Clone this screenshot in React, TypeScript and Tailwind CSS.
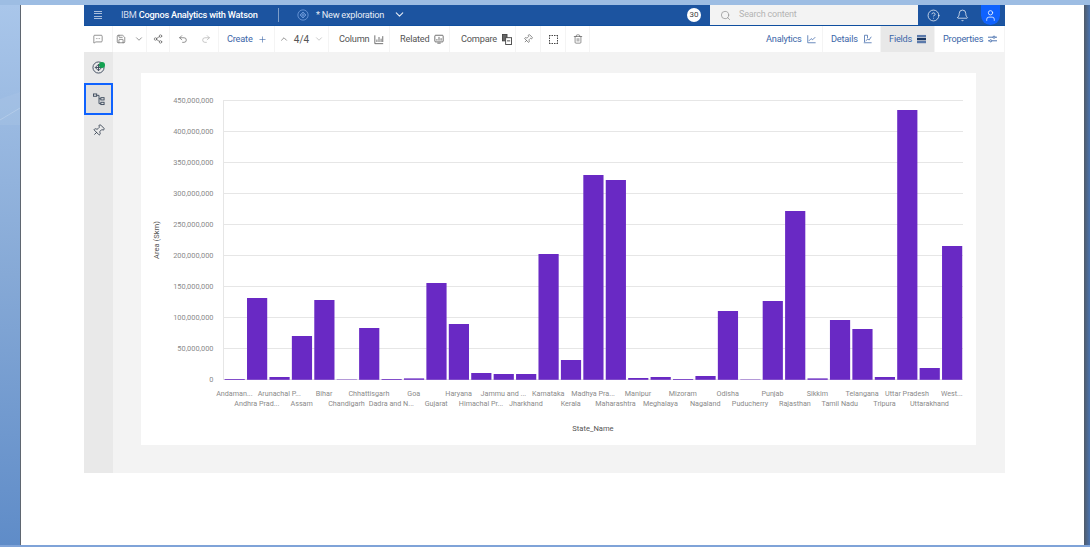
import {
  Bell,
  ChevronDown,
  ChevronUp,
  CircleHelp,
  MessageSquareMore,
  Pin,
  Plus,
  Redo2,
  Save,
  Search,
  Share2,
  Trash2,
  Undo2,
  User,
} from 'lucide-react'
import type { ReactNode } from 'react'

const font = 'font-["Roboto",sans-serif]'

// [label, top of bar in chart px]
const states: [string, number][] = [
  ['Andaman...', 379],
  ['Andhra Prad...', 298],
  ['Arunachal P...', 377],
  ['Assam', 336],
  ['Bihar', 300],
  ['Chandigarh', 379.4],
  ['Chhattisgarh', 328],
  ['Dadra and N...', 379],
  ['Goa', 378.4],
  ['Gujarat', 283],
  ['Haryana', 324],
  ['Himachal Pr...', 373],
  ['Jammu and ...', 374],
  ['Jharkhand', 374],
  ['Karnataka', 254],
  ['Kerala', 360],
  ['Madhya Pra...', 175],
  ['Maharashtra', 180],
  ['Manipur', 378],
  ['Meghalaya', 377],
  ['Mizoram', 379],
  ['Nagaland', 376],
  ['Odisha', 311],
  ['Puducherry', 379.4],
  ['Punjab', 301],
  ['Rajasthan', 211],
  ['Sikkim', 378.4],
  ['Tamil Nadu', 320],
  ['Telangana', 329],
  ['Tripura', 377],
  ['Uttar Pradesh', 110],
  ['Uttarakhand', 368],
  ['West...', 246],
]

const ticks = ['450,000,000', '400,000,000', '350,000,000', '300,000,000', '250,000,000', '200,000,000', '150,000,000', '100,000,000', '50,000,000', '0']

function Chart() {
  return (
    <svg width="835" height="372" viewBox="141 73 835 372" className={`block ${font}`}>
      {ticks.map((t, i) => {
        const y = 100 + i * 31
        return (
          <g key={t}>
            <line x1={223} x2={963} y1={y + 0.5} y2={y + 0.5} stroke="#e6e6e6" />
            <text x={213.5} y={y + 3} fontSize="7.4" textAnchor="end" fill="#8a8a8a">{t}</text>
          </g>
        )
      })}
      <line x1={223.5} x2={223.5} y1={100} y2={380} stroke="#e6e6e6" />
      {states.map(([name, top], i) => {
        const x = 224.6 + i * 22.42
        return (
          <g key={name}>
            <rect x={x} y={top} width={20.2} height={379.8 - top} fill="#6929c4" />
            <text x={x + 9.8} y={i % 2 === 0 ? 395.5 : 405.5} fontSize="7.2" textAnchor="middle" fill="#8a8a8a">{name}</text>
          </g>
        )
      })}
      <text x={593} y={431} fontSize="7.6" textAnchor="middle" fill="#555">State_Name</text>
      <text x={159} y={240} fontSize="7.6" textAnchor="middle" fill="#555" transform="rotate(-90 159 240)">Area (Skm)</text>
    </svg>
  )
}

function ColumnIcon() {
  return (
    <svg width="10" height="11" viewBox="0 0 12 12" fill="none" stroke="#555" strokeWidth="1">
      <path d="M1 1v10h10M3.5 9V6M6 9V3M8.5 9V5M10.5 9V2" />
    </svg>
  )
}

function RelatedIcon() {
  return (
    <svg width="10" height="10" viewBox="0 0 12 12" fill="none" stroke="#555" strokeWidth="1">
      <rect x="1" y="1.5" width="10" height="8" rx="1" />
      <path d="M3.5 8V6M6 8V3.5M8.5 8V5M4 11h4" />
    </svg>
  )
}

function CompareIcon() {
  return (
    <svg width="10" height="11" viewBox="0 0 11 12" fill="none" stroke="#444" strokeWidth="1">
      <rect x="0.5" y="0.5" width="5" height="7" fill="#666" />
      <rect x="4" y="4" width="6.5" height="7.5" fill="#fff" />
      <path d="M5.5 7.5h3.5" />
    </svg>
  )
}

function MarqueeIcon() {
  return (
    <svg width="9" height="9" viewBox="0 0 9 9" fill="none" stroke="#444" strokeWidth="1">
      <path d="M0.5 2.5v4M8.5 2.5v4M2.5 0.5h4M2.5 8.5h4" strokeDasharray="1.5 1" />
      <path d="M0 0.5h1.5M0.5 0v1.5M7.5 0.5H9M8.5 0v1.5M0 8.5h1.5M0.5 7.5V9M7.5 8.5H9M8.5 7.5V9" />
    </svg>
  )
}

function AnalyticsIcon() {
  return (
    <svg width="9" height="10" viewBox="0 0 12 12" fill="none" stroke="#3c66a8" strokeWidth="1">
      <path d="M1 1v10h10.5M2.5 8.5l3-3 2 1.5 3.5-3.5" />
    </svg>
  )
}

function DetailsIcon() {
  return (
    <svg width="9" height="10" viewBox="0 0 12 12" fill="none" stroke="#3c66a8" strokeWidth="1">
      <path d="M1 11h10.5M2 10V1h4v4M3.5 8.5l3-2.5 1.5 1.5L11 3" />
    </svg>
  )
}

function FieldsIcon() {
  return (
    <svg width="9" height="10" viewBox="0 0 10 10">
      <rect x="0" y="0.5" width="10" height="2.6" fill="#5b7aab" />
      <rect x="0" y="3.8" width="10" height="2.6" fill="#16345f" />
      <rect x="0" y="7.1" width="10" height="2.6" fill="#5b7aab" />
    </svg>
  )
}

function PropertiesIcon() {
  return (
    <svg width="9" height="8" viewBox="0 0 10 8" fill="none" stroke="#3c66a8" strokeWidth="1">
      <path d="M0 2h5.5M8 2h2M0 6h1.5M4.5 6H10" />
      <circle cx="6.7" cy="2" r="1.2" />
      <circle cx="3" cy="6" r="1.2" />
    </svg>
  )
}

function WatsonMark({ color, size }: { color: string; size: number }) {
  return (
    <svg width={size} height={size} viewBox="0 0 14 14" fill="none" stroke={color} strokeWidth="1">
      <circle cx="7" cy="7" r="6" />
      <path d="M7 3.5L10.5 7 7 10.5 3.5 7zM3.5 7h7M7 3.5v7" />
    </svg>
  )
}

function TreeIcon() {
  return (
    <svg width="12" height="13" viewBox="0 0 13 13" fill="none" stroke="#3c4a5c" strokeWidth="1">
      <rect x="0.5" y="0.5" width="3.5" height="2.5" />
      <rect x="8.5" y="4.5" width="3.5" height="2.5" />
      <rect x="8.5" y="9.5" width="3.5" height="2.5" />
      <path d="M4 2h2.5v9h2M6.5 5.7h2" />
    </svg>
  )
}

function Cell({ w, children }: { w: string; children: ReactNode }) {
  return (
    <div className={`${w} flex h-full shrink-0 items-center justify-center gap-[8px] border-r border-[#f4f4f4]`}>
      {children}
    </div>
  )
}

function LabelCell({ w, children, active }: { w: string; children: ReactNode; active?: boolean }) {
  return (
    <div className={`${w} flex h-full shrink-0 items-center gap-[5px] border-r border-[#f4f4f4] tracking-[-0.2px] ${active ? 'bg-[#e8e8e8]' : ''}`}>
      {children}
    </div>
  )
}

function TopBar() {
  return (
    <div className="flex h-[21px] shrink-0 items-stretch border-b border-[#0f4f9f] bg-[#1c54a0] text-white">
      <div className="flex w-[602px] shrink-0 items-center">
        <div className="flex w-[27px] shrink-0 flex-col items-center gap-[1.5px]">
          <span className="h-px w-[8px] bg-[#a9bedc]" />
          <span className="h-px w-[8px] bg-[#a9bedc]" />
          <span className="h-px w-[8px] bg-[#a9bedc]" />
          <span className="h-px w-[8px] bg-[#a9bedc]" />
        </div>
        <div className="ml-[10px] w-[157px] shrink-0 whitespace-nowrap text-[9.2px] tracking-[-0.2px]">
          <span className="text-[#d5dfee]">IBM </span>
          <span className="font-medium">Cognos Analytics with Watson</span>
        </div>
        <span className="h-[14px] w-px bg-[#7e9ec9]" />
        <div className="ml-[18px] flex items-center">
          <WatsonMark color="#6f9adb" size={12} />
          <span className="ml-[7px] whitespace-nowrap text-[9.2px] tracking-[-0.25px] text-[#e6ecf5]">* New exploration</span>
          <ChevronDown size={13} strokeWidth={2} className="ml-[9px] text-[#e6ecf5]" />
        </div>
      </div>
      <div className="flex w-[24px] shrink-0 items-center justify-end pr-[9px]">
        <span className="flex h-[14px] w-[14px] shrink-0 items-center justify-center rounded-full bg-white text-[8px] text-[#444]">30</span>
      </div>
      <div className="flex w-[208px] shrink-0 items-center bg-[#f3f3f3] pl-[10px] text-[#8c8c8c]">
        <Search size={11} strokeWidth={1.5} />
        <span className="ml-[8px] text-[9px] tracking-[-0.2px] text-[#b4b4b4]">Search content</span>
      </div>
      <div className="flex w-[87px] shrink-0 items-center">
        <CircleHelp size={13} strokeWidth={1.3} className="ml-[9px]" />
        <Bell size={13} strokeWidth={1.3} className="ml-[16px]" />
        <span className="ml-[12px] flex h-full w-[19px] items-center justify-center rounded-b-full bg-[#0f62fe]">
          <User size={13} strokeWidth={1.4} />
        </span>
      </div>
    </div>
  )
}

function Toolbar() {
  const label = 'text-[9.2px] text-[#555] whitespace-nowrap'
  const blue = 'text-[9.2px] text-[#3c66a8] whitespace-nowrap'
  return (
    <div className="flex h-[26px] shrink-0 items-center bg-white text-[#555]">
      <Cell w="w-[29px]"><MessageSquareMore size={10} strokeWidth={1.5} /></Cell>
      <Cell w="w-[34px]">
        <Save size={10} strokeWidth={1.5} />
        <ChevronDown size={10} strokeWidth={1.5} />
      </Cell>
      <Cell w="w-[23px]"><Share2 size={10} strokeWidth={1.5} /></Cell>
      <Cell w="w-[49px]">
        <Undo2 size={10} strokeWidth={1.5} className="mr-[5px]" />
        <Redo2 size={10} strokeWidth={1.5} className="text-[#a8a8a8]" />
      </Cell>
      <LabelCell w="w-[56px] pl-[8px]">
        <span className={blue}>Create</span>
        <Plus size={9} strokeWidth={1.6} className="text-[#3c66a8]" />
      </LabelCell>
      <Cell w="w-[54px]">
        <div className="flex items-center gap-[5px]">
          <ChevronUp size={10} strokeWidth={1.5} />
          <span className="text-[10px]">4/4</span>
          <ChevronDown size={10} strokeWidth={1.5} className="text-[#a8a8a8]" />
        </div>
      </Cell>
      <LabelCell w="w-[61px] pl-[10px]"><span className={label}>Column</span><ColumnIcon /></LabelCell>
      <LabelCell w="w-[60px] pl-[10px]"><span className={label}>Related</span><RelatedIcon /></LabelCell>
      <LabelCell w="w-[66px] pl-[11px]"><span className={label}>Compare</span><CompareIcon /></LabelCell>
      <Cell w="w-[25px]"><Pin size={10} strokeWidth={1.5} className="rotate-45" /></Cell>
      <Cell w="w-[25px]"><MarqueeIcon /></Cell>
      <Cell w="w-[24px]"><Trash2 size={10} strokeWidth={1.5} /></Cell>
      <div className="grow" />
      <LabelCell w="w-[65px] pl-[8px]"><span className={blue}>Analytics</span><AnalyticsIcon /></LabelCell>
      <LabelCell w="w-[58px] pl-[8px]"><span className={blue}>Details</span><DetailsIcon /></LabelCell>
      <LabelCell w="w-[54px] pl-[8px]" active><span className={blue}>Fields</span><FieldsIcon /></LabelCell>
      <LabelCell w="w-[70px] pl-[8px]"><span className={blue}>Properties</span><PropertiesIcon /></LabelCell>
    </div>
  )
}

function SideRail() {
  return (
    <div className="flex w-[29px] shrink-0 flex-col bg-[#e9e9e9] text-[#3c4a5c]">
      <div className="relative flex h-[31px] items-center justify-center">
        <WatsonMark color="#3c4a5c" size={13} />
        <span className="absolute left-[15px] top-[10px] h-[6px] w-[6px] rounded-full bg-[#12a150]" />
      </div>
      <div className="flex h-[32px] items-center justify-center border-2 border-[#0f62fe] bg-[#e0e0e0]">
        <TreeIcon />
      </div>
      <div className="flex h-[31px] items-center justify-center">
        <Pin size={13} strokeWidth={1.5} className="rotate-45 text-[#2f3b4c]" />
      </div>
    </div>
  )
}

function DesktopStrip() {
  return (
    <div className="relative w-[20px] shrink-0 bg-gradient-to-b from-[#a9c6ea] via-[#86a9d6] to-[#5f8cc8]">
      <svg width="20" height="40" viewBox="0 0 20 40" className="absolute left-0 top-[80px]">
        <path d="M0 14L20 7V40H0z" fill="#ffffff" fillOpacity="0.06" />
        <path d="M0 35L20 23" stroke="#ffffff" strokeOpacity="0.2" fill="none" />
      </svg>
    </div>
  )
}

export default function App() {
  return (
    <div className={`flex h-[547px] w-[1090px] flex-col overflow-hidden bg-[#7ba0d4] ${font}`}>
      <div className="h-[5px] shrink-0 bg-[#9dbde3]" />
      <div className="flex h-[540px] shrink-0">
        <DesktopStrip />
        <div className="w-px shrink-0 bg-[#5f6670]" />
        <div className="w-[1063px] shrink-0 bg-white pl-[63px]">
          <div className="flex h-[468px] w-[921px] flex-col">
            <TopBar />
            <Toolbar />
            <div className="flex grow">
              <SideRail />
              <div className="grow bg-[#f3f3f3] pl-[28px] pt-[21px]">
                <div className="w-[835px] bg-white">
                  <Chart />
                </div>
              </div>
            </div>
          </div>
        </div>
        <div className="w-[6px] shrink-0 bg-gradient-to-r from-[#505a68] to-[#4a74b0]" />
      </div>
      <div className="h-[2px] shrink-0 bg-[#7fa3d8]" />
    </div>
  )
}
